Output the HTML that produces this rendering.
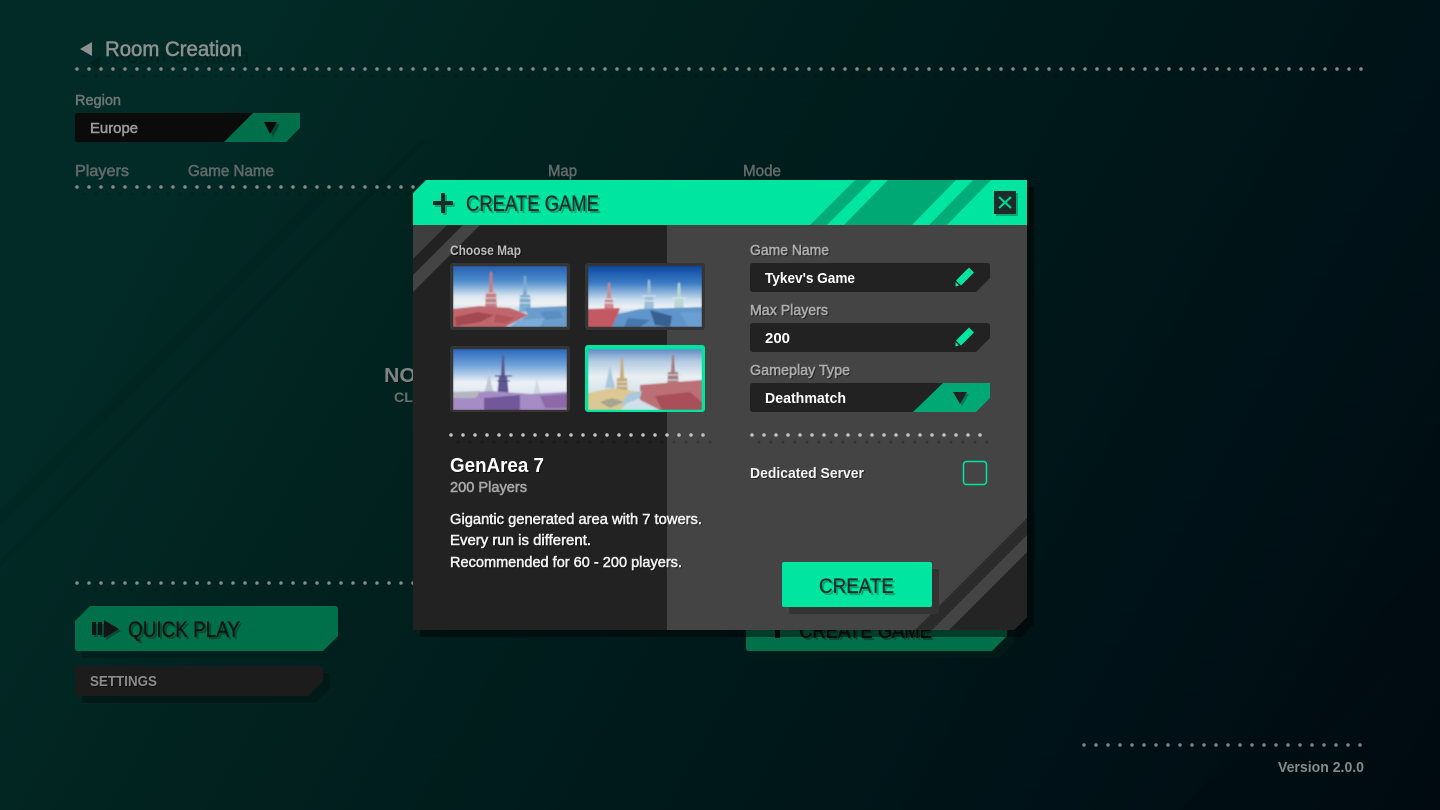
<!DOCTYPE html>
<html><head><meta charset="utf-8"><title>Room Creation</title>
<style>
html,body{margin:0;padding:0;background:#000;width:1440px;height:810px;overflow:hidden}
svg{display:block}
text{font-family:"Liberation Sans",sans-serif;font-weight:normal;stroke-width:.55px}
.b{font-weight:bold;stroke-width:0}
.s1{filter:drop-shadow(1px 1px 0 rgba(0,0,0,.45))}
.sg{filter:drop-shadow(2px 2px 0 #00a873)}
.sq{filter:drop-shadow(2px 2px 0 #024d35)}
</style></head><body>
<svg width="1440" height="810" viewBox="0 0 1440 810" xmlns="http://www.w3.org/2000/svg">
<defs>
<linearGradient id="bg" x1="0" y1="0" x2="1440" y2="810" gradientUnits="userSpaceOnUse">
<stop offset="0" stop-color="#022a27"/><stop offset=".14" stop-color="#022a26"/><stop offset=".33" stop-color="#01221f"/><stop offset=".55" stop-color="#001a1b"/><stop offset=".8" stop-color="#001217"/><stop offset="1" stop-color="#000a10"/>
</linearGradient>
<linearGradient id="sky1" x1="0" y1="0" x2="0" y2="1"><stop offset="0" stop-color="#2660b2"/><stop offset=".25" stop-color="#4f8dcc"/><stop offset=".5" stop-color="#dce7f0"/><stop offset=".62" stop-color="#f0f2f4"/><stop offset=".78" stop-color="#bcd0e2"/></linearGradient>
<linearGradient id="sky2" x1="0" y1="0" x2="0" y2="1"><stop offset="0" stop-color="#0b479f"/><stop offset=".28" stop-color="#3b7bc4"/><stop offset=".55" stop-color="#c8dcec"/><stop offset=".68" stop-color="#eef2f5"/><stop offset=".8" stop-color="#b5cde2"/></linearGradient>
<linearGradient id="sky3" x1="0" y1="0" x2="0" y2="1"><stop offset="0" stop-color="#2a67bd"/><stop offset=".28" stop-color="#74a6da"/><stop offset=".55" stop-color="#eef2f7"/><stop offset=".8" stop-color="#d8e0ec"/></linearGradient>
<linearGradient id="sky4" x1="0" y1="0" x2="0" y2="1"><stop offset="0" stop-color="#5f8ac4"/><stop offset=".2" stop-color="#b4cbe2"/><stop offset=".45" stop-color="#e9eff2"/><stop offset=".8" stop-color="#cfe0ea"/></linearGradient>
<filter id="soft" x="-5%" y="-5%" width="110%" height="110%"><feGaussianBlur stdDeviation=".7"/></filter>
<clipPath id="c1"><rect x="453" y="266" width="114" height="61"/></clipPath>
<clipPath id="c2"><rect x="588" y="266" width="114" height="61"/></clipPath>
<clipPath id="c3"><rect x="453" y="349" width="114" height="61"/></clipPath>
<clipPath id="c4"><rect x="588" y="349" width="114" height="61"/></clipPath>
</defs>

<!-- background -->
<rect width="1440" height="810" fill="url(#bg)"/>
<g fill="#000" opacity=".03">
<polygon points="0,510 320,190 335,190 0,525"/>
<polygon points="0,560 420,140 428,140 0,568"/>
<polygon points="1180,810 1440,550 1440,620 1250,810"/>
</g>

<!-- header -->
<polygon points="93,49 82,56 93,63" fill="#000" opacity=".18" transform="translate(7,7)"/>
<text x="112" y="63" font-size="21" textLength="137" lengthAdjust="spacingAndGlyphs" fill="#000" opacity=".2">Room Creation</text>
<polygon points="92,42 80,49 92,56" fill="#8c9190"/>
<text x="105" y="56" font-size="21" textLength="137" lengthAdjust="spacingAndGlyphs" fill="#8c9190" stroke="#8c9190">Room Creation</text>
<line x1="77" y1="69" x2="1364" y2="69" stroke="#858d8c" stroke-width="3.500" stroke-linecap="round" stroke-dasharray="0 12"/>
<line x1="84" y1="76" x2="1371" y2="76" stroke="#000" stroke-opacity=".2" stroke-width="3" stroke-linecap="round" stroke-dasharray="0 12"/>

<!-- region -->
<text x="75" y="105" font-size="15" textLength="46" lengthAdjust="spacingAndGlyphs" fill="#6c7675" stroke="#6c7675">Region</text>
<path d="M78,113H300V128L286,142H78Q75,142 75,139V116Q75,113 78,113Z" fill="#0b0b0b"/>
<polygon points="253,113 300,113 300,128 286,142 224,142" fill="#00704a"/>
<polygon points="267,124 280,124 273,137" fill="#044a33"/>
<polygon points="264,122 277,122 270,134" fill="#0b0b0b"/>
<text x="90" y="133" font-size="15" textLength="48" lengthAdjust="spacingAndGlyphs" fill="#989b9a" stroke="#989b9a" class="s1">Europe</text>

<!-- columns -->
<g fill="#5f6a69" stroke="#5f6a69" font-size="16">
<text x="75" y="176" textLength="54" lengthAdjust="spacingAndGlyphs">Players</text>
<text x="188" y="176" textLength="86" lengthAdjust="spacingAndGlyphs">Game Name</text>
<text x="548" y="176" textLength="29" lengthAdjust="spacingAndGlyphs">Map</text>
<text x="743" y="176" textLength="38" lengthAdjust="spacingAndGlyphs">Mode</text>
</g>
<line x1="77" y1="187" x2="420" y2="187" stroke="#858d8c" stroke-width="3.500" stroke-linecap="round" stroke-dasharray="0 12"/>
<line x1="84" y1="194" x2="420" y2="194" stroke="#000" stroke-opacity=".15" stroke-width="3" stroke-linecap="round" stroke-dasharray="0 12"/>

<text x="384" y="382" font-size="20" textLength="32" lengthAdjust="spacingAndGlyphs" fill="#7d8483" class="b s1">NO</text>
<text x="394" y="402" font-size="14" textLength="19" lengthAdjust="spacingAndGlyphs" fill="#66706f" class="b">CL</text>

<line x1="77" y1="583" x2="420" y2="583" stroke="#858d8c" stroke-width="3.500" stroke-linecap="round" stroke-dasharray="0 12"/>
<line x1="84" y1="590" x2="420" y2="590" stroke="#000" stroke-opacity=".15" stroke-width="3" stroke-linecap="round" stroke-dasharray="0 12"/>

<!-- quick play -->
<path d="M97,613H345V643L330,658H82V628Z" fill="#01201d"/>
<path d="M90,606H335Q338,606 338,609V636L323,651H78Q75,651 75,648V621Z" fill="#00704a"/>
<g fill="#024d35" transform="translate(2,2)"><rect x="92" y="622" width="4" height="13"/><rect x="98" y="622" width="4" height="13"/><polygon points="104,620 119,629 104,638"/></g>
<g fill="#141414"><rect x="92" y="622" width="4" height="13"/><rect x="98" y="622" width="4" height="13"/><polygon points="104,620 119,629 104,638"/></g>
<text x="128" y="637" font-size="22" class="sq" textLength="112" lengthAdjust="spacingAndGlyphs" fill="#141414" stroke="#141414" style="stroke-width:.3px">QUICK PLAY</text>

<!-- settings -->
<path d="M82,673H330V688L315,703H82Z" fill="#011a18"/>
<path d="M78,666H320Q323,666 323,669V681L308,696H78Q75,696 75,693V669Q75,666 78,666Z" fill="#1c1c1c"/>
<text x="90" y="686" font-size="15" textLength="67" lengthAdjust="spacingAndGlyphs" fill="#8b8b8b" class="b s1">SETTINGS</text>

<!-- hidden create game button -->
<path d="M753,613H1014V643L999,658H753Z" fill="#011a18"/>
<path d="M749,606H1004Q1007,606 1007,609V636L992,651H749Q746,651 746,648V609Q746,606 749,606Z" fill="#00704a"/>
<rect x="775" y="618" width="5" height="20" fill="#111"/>
<text x="799" y="638" font-size="22" class="sq" textLength="133" lengthAdjust="spacingAndGlyphs" fill="#111" stroke="#111" style="stroke-width:.3px">CREATE GAME</text>

<!-- version -->
<line x1="1084" y1="745" x2="1364" y2="745" stroke="#7f8587" stroke-width="3.500" stroke-linecap="round" stroke-dasharray="0 12"/>
<text x="1278" y="772" font-size="15" textLength="86" lengthAdjust="spacingAndGlyphs" fill="#858a8b" class="b">Version 2.0.0</text>

<!-- modal shadow -->
<polygon points="420,187 1034,187 1034,624 1021,637 420,637" fill="#000" opacity=".45"/>

<!-- modal -->
<polygon points="413,225 1027,225 1027,617 1014,630 413,630" fill="#444"/>
<rect x="413" y="225" width="254" height="405" fill="#222"/>
<polygon points="413,225 447,225 413,259" fill="#3e3e3e"/>
<polygon points="463,225 480,225 413,292 413,275" fill="#444"/>
<polygon points="1027,518 915,630 932,630 1027,535" fill="#2b2b2b"/>
<polygon points="1027,552 949,630 1014,630 1027,617" fill="#242424"/>

<!-- modal header -->
<polygon points="413,193 426,180 1027,180 1027,225 413,225" fill="#00e6a0"/>
<polygon points="855,180 872,180 827,225 810,225" fill="#00ad78"/>
<polygon points="888,180 956,180 912,225 844,225" fill="#00a873"/>
<polygon points="973,180 991,180 947,225 929,225" fill="#00ad78"/>
<g fill="#00a873" transform="translate(2,2)"><rect x="441" y="193" width="4" height="20"/><rect x="433" y="201" width="20" height="4"/></g>
<g fill="#1c2b28"><rect x="441" y="193" width="4" height="20"/><rect x="433" y="201" width="20" height="4"/></g>
<text x="466" y="211" font-size="22" class="sg" textLength="133" lengthAdjust="spacingAndGlyphs" fill="#1c2b28" stroke="#1c2b28" style="stroke-width:.3px">CREATE GAME</text>
<rect x="996" y="193" width="22" height="23" fill="#00a873"/>
<rect x="994" y="191" width="22" height="23" fill="#1d2b29"/>
<path d="M999,197L1011,208M1011,197L999,208" stroke="#00d693" stroke-width="2.200" fill="none"/>

<!-- left panel -->
<text x="450" y="255" font-size="13.500" textLength="71" lengthAdjust="spacingAndGlyphs" fill="#bdbdbd" class="b s1">Choose Map</text>

<rect x="450" y="263" width="120" height="67" rx="3" fill="#353535"/>
<rect x="585" y="263" width="120" height="67" rx="3" fill="#353535"/>
<rect x="450" y="346" width="120" height="66" rx="3" fill="#353535"/>
<rect x="585" y="345" width="120" height="67" rx="3" fill="#00e6a0"/>

<!-- thumb 1 -->
<g clip-path="url(#c1)"><g filter="url(#soft)">
<rect x="453" y="266" width="114" height="61" fill="url(#sky1)"/>
<polygon points="490,272 492,272 493,292 496,292 497,310 485,310 486,292 489,292" fill="#c27e84"/>
<polygon points="524,276 526,276 527,295 530,295 531,312 519,312 520,295 523,295" fill="#7dacd0"/>
<path d="M483,293h17M484,298h15M485,303h13" stroke="#d8d3d4" stroke-width=".9"/>
<path d="M517,298h17M519,303h13" stroke="#d6e2ea" stroke-width=".9"/>
<polygon points="453,309 480,306 510,308 528,315 505,327 453,327" fill="#c0666c"/>
<polygon points="510,327 528,315 525,308 567,306 567,327" fill="#6a9ccc"/>
<polygon points="455,317 478,312 494,315 480,322 456,326" fill="#a4494f"/>
<polygon points="496,314 515,318 506,323 494,322" fill="#b2545b"/>
<polygon points="540,312 560,310 562,318 545,320" fill="#5a8ec2"/>
<polygon points="518,320 545,318 540,327 510,327" fill="#7cacd8"/>
</g></g>

<!-- thumb 2 -->
<g clip-path="url(#c2)"><g filter="url(#soft)">
<rect x="588" y="266" width="114" height="61" fill="url(#sky2)"/>
<polygon points="608,283 610,283 611,298 613,298 614,312 604,312 605,298 607,298" fill="#cb8a90"/>
<polygon points="648,280 650,280 651,296 653,296 654,310 644,310 645,296 647,296" fill="#9dbfd8"/>
<polygon points="678,283 680,283 681,298 683,298 684,310 674,310 675,298 677,298" fill="#bcd6d2"/>
<path d="M602,299h14M603,303h12M642,296h14M643,301h12M672,298h14" stroke="#dfe8ee" stroke-width=".9"/>
<polygon points="588,309 620,308 614,327 588,327" fill="#c35a64"/>
<polygon points="612,327 618,314 640,309 702,307 702,327" fill="#5f95cb"/>
<polygon points="628,318 650,320 640,327 624,327" fill="#4678ac"/>
<polygon points="650,310 672,316 670,327 655,325" fill="#38618f"/>
<polygon points="680,312 702,312 702,327 688,327" fill="#6b9fd1"/>
</g></g>

<!-- thumb 3 -->
<g clip-path="url(#c3)"><g filter="url(#soft)">
<rect x="453" y="349" width="114" height="61" fill="url(#sky3)"/>
<polygon points="487,383 489,368 491,383 494,394 484,394" fill="#bfc8d4"/>
<polygon points="535,388 537,378 539,388 541,394 533,394" fill="#cdd6e0"/>
<polygon points="502,355 504,355 505,376 507,376 509,398 497,398 499,376 501,376" fill="#5f5592"/>
<path d="M495,376h17M497,381h13" stroke="#4d4880" stroke-width="1.300"/>
<polygon points="453,394 490,391 530,394 567,392 567,410 453,410" fill="#a58cc4"/>
<polygon points="484,398 520,395 520,410 484,410" fill="#71589a"/>
<polygon points="540,396 567,394 567,408 545,408" fill="#8e69a8"/>
<polygon points="453,392 480,391 476,398 453,398" fill="#b3b6c0"/>
</g></g>

<!-- thumb 4 -->
<g clip-path="url(#c4)"><g filter="url(#soft)">
<rect x="588" y="349" width="114" height="61" fill="url(#sky4)"/>
<polygon points="608,375 610,365 612,375 615,388 605,388" fill="#aac8de"/>
<polygon points="621,358 623,358 624,378 627,378 628,398 616,398 617,378 620,378" fill="#c6ab78"/>
<polygon points="672,355 674,355 675,372 678,372 679,390 667,390 668,372 671,372" fill="#a57c82"/>
<path d="M614,382h17M616,386h13M665,375h17M667,380h13" stroke="#d9dcd8" stroke-width=".9"/>
<polygon points="588,393 612,388 640,392 620,410 588,410" fill="#dcc894"/>
<polygon points="600,402 612,398 624,402 610,408" fill="#a8a58f"/>
<polygon points="640,385 702,380 702,410 660,410 640,400" fill="#bb7076"/>
<polygon points="655,396 690,392 702,402 702,410 662,410" fill="#a94f5a"/>
<polygon points="628,394 642,391 640,398 620,406" fill="#a8c8e0"/>
</g></g>

<line x1="451" y1="435" x2="707" y2="435" stroke="#c4c4c4" stroke-width="3.500" stroke-linecap="round" stroke-dasharray="0 12"/>
<line x1="458" y1="442" x2="714" y2="442" stroke="#000" stroke-opacity=".2" stroke-width="3" stroke-linecap="round" stroke-dasharray="0 12"/>

<text x="450" y="472" font-size="20" textLength="94" lengthAdjust="spacingAndGlyphs" fill="#fff" class="s1 b">GenArea 7</text>
<text x="450" y="492" font-size="14.500" textLength="77" lengthAdjust="spacingAndGlyphs" fill="#a8a8a8" stroke="#a8a8a8">200 Players</text>
<g font-size="15" fill="#f0f0f0" stroke="#f0f0f0" class="s1">
<text x="450" y="524" textLength="252" lengthAdjust="spacingAndGlyphs">Gigantic generated area with 7 towers.</text>
<text x="450" y="545" textLength="141" lengthAdjust="spacingAndGlyphs">Every run is different.</text>
<text x="450" y="567" textLength="232" lengthAdjust="spacingAndGlyphs">Recommended for 60 - 200 players.</text>
</g>

<!-- right panel -->
<text x="750" y="255" font-size="15" textLength="79" lengthAdjust="spacingAndGlyphs" fill="#adadad" stroke="#adadad" class="s1">Game Name</text>
<path d="M753,263H987Q990,263 990,266V278L976,292H753Q750,292 750,289V266Q750,263 753,263Z" fill="#222"/>
<text x="765" y="283" font-size="15" textLength="90" lengthAdjust="spacingAndGlyphs" fill="#fff" class="b">Tykev's Game</text>
<path d="M969,267.500L974,272.500L961,285.500L956,280.500Z M955.500,282L959,285.500L955.500,286.500Z" fill="#00e6a0"/>

<text x="750" y="315" font-size="15" textLength="78" lengthAdjust="spacingAndGlyphs" fill="#adadad" stroke="#adadad" class="s1">Max Players</text>
<path d="M753,323H987Q990,323 990,326V338L976,352H753Q750,352 750,349V326Q750,323 753,323Z" fill="#222"/>
<text x="765" y="343" font-size="15" textLength="25" lengthAdjust="spacingAndGlyphs" fill="#fff" class="b">200</text>
<path d="M969,327.500L974,332.500L961,345.500L956,340.500Z M955.500,342L959,345.500L955.500,346.500Z" fill="#00e6a0"/>

<text x="750" y="375" font-size="15" textLength="100" lengthAdjust="spacingAndGlyphs" fill="#adadad" stroke="#adadad" class="s1">Gameplay Type</text>
<path d="M753,383H990V398L976,412H753Q750,412 750,409V386Q750,383 753,383Z" fill="#222"/>
<polygon points="943,383 990,383 990,398 976,412 913,412" fill="#00a873"/>
<polygon points="956,394 969,394 962,406" fill="#067a56"/>
<polygon points="953,392 967,392 960,404" fill="#222"/>
<text x="765" y="403" font-size="15" textLength="81" lengthAdjust="spacingAndGlyphs" fill="#fff" class="b">Deathmatch</text>

<line x1="752" y1="435" x2="992" y2="435" stroke="#c4c4c4" stroke-width="3.500" stroke-linecap="round" stroke-dasharray="0 12"/>
<line x1="759" y1="442" x2="999" y2="442" stroke="#000" stroke-opacity=".2" stroke-width="3" stroke-linecap="round" stroke-dasharray="0 12"/>

<text x="750" y="478" font-size="15" textLength="114" lengthAdjust="spacingAndGlyphs" fill="#f2f2f2" class="b s1">Dedicated Server</text>
<rect x="963.500" y="461.500" width="23" height="23" rx="3" fill="none" stroke="#00e6a0" stroke-width="1.500"/>

<!-- create -->
<rect x="789" y="569" width="150" height="45" rx="2" fill="#333"/>
<rect x="782" y="562" width="150" height="45" rx="2" fill="#00e6a0"/>
<text x="819" y="593" font-size="21" class="sg" textLength="75" lengthAdjust="spacingAndGlyphs" fill="#1c2b28" stroke="#1c2b28" style="stroke-width:.3px">CREATE</text>
</svg>
</body></html>
